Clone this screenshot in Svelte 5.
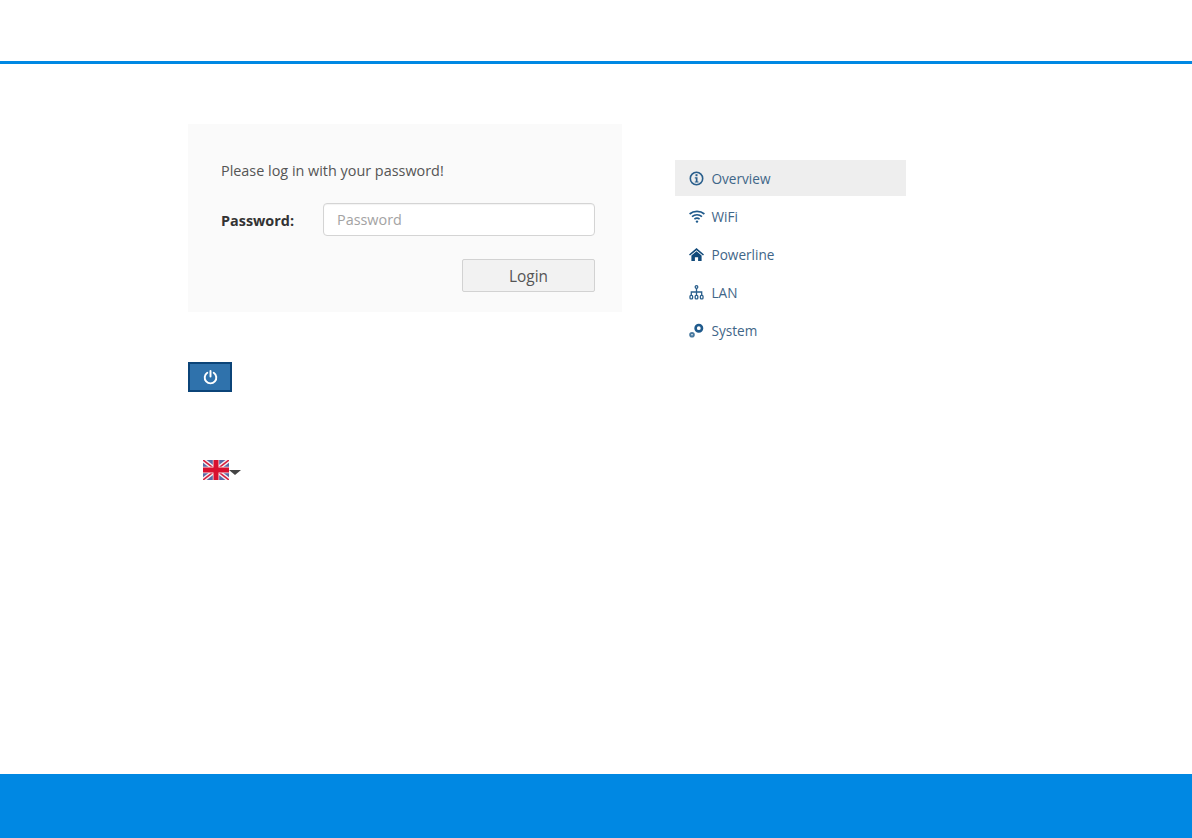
<script>
  const items = [
    { label: 'Overview', icon: 'info', active: true },
    { label: 'WiFi', icon: 'wifi' },
    { label: 'Powerline', icon: 'home' },
    { label: 'LAN', icon: 'lan' },
    { label: 'System', icon: 'gear' }
  ];
</script>

<div class="page">
  <header class="top"></header>
  <main class="main">
    <div class="left">
      <form class="panel" onsubmit={(e) => e.preventDefault()}>
        <p class="intro">Please log in with your password!</p>
        <div class="row">
          <label class="lbl" for="pw">Password:</label>
          <input id="pw" class="input" type="password" placeholder="Password" />
        </div>
        <div class="actions">
          <button class="login" type="submit">Login</button>
        </div>
      </form>
      <button class="power" type="button" aria-label="Power">
        <svg width="15" height="15" viewBox="0 0 14 14" fill="none" stroke="#fff" stroke-width="1.8" stroke-linecap="round">
          <path d="M4 2.6a5.4 5.4 0 1 0 6 0" />
          <path d="M7 1v5" />
        </svg>
      </button>
      <div class="lang">
        <svg class="flag" width="26" height="20" viewBox="0 0 26 20">
          <rect width="26" height="20" fill="#5a68a4" />
          <path d="M0 0L26 20M26 0L0 20" stroke="#f6f0f2" stroke-width="4.4" />
          <path d="M0 0L26 20M26 0L0 20" stroke="#d8203f" stroke-width="1.6" />
          <path d="M13 0V20M0 10H26" stroke="#f8e8ea" stroke-width="6.4" />
          <path d="M13 0V20M0 10H26" stroke="#d8102f" stroke-width="5" />
        </svg>
        <span class="caret"></span>
      </div>
    </div>
    <nav class="nav">
      {#each items as item}
        <a class="item" class:active={item.active} href="#top">
          <span class="ico">
            {#if item.icon === 'info'}
              <svg width="15" height="15" viewBox="0 0 15 15" fill="none">
                <circle cx="7.5" cy="7.5" r="6.2" stroke="#2a5f8c" stroke-width="1.6" />
                <rect x="6.5" y="3.2" width="2" height="2" fill="#2a5f8c" />
                <path d="M5.8 6.2h2.7v4.2h1v1.2H5.8v-1.2h1V7.4h-1z" fill="#2a5f8c" />
              </svg>
            {:else if item.icon === 'wifi'}
              <svg width="16" height="13" viewBox="0 0 16 13" fill="none" stroke="#1f5a8c" stroke-width="1.7">
                <path d="M.6 4C4.7.6 11.3.6 15.4 4" />
                <path d="M3 6.6c2.9-2.3 7.1-2.3 10 0" />
                <path d="M5.4 9.1c1.6-1.1 3.6-1.1 5.2 0" />
                <circle cx="8" cy="11.6" r="1.2" fill="#1f5a8c" stroke="none" />
              </svg>
            {:else if item.icon === 'home'}
              <svg width="15" height="13" viewBox="0 0 15 13">
                <path d="M7.5 0L15 6.4l-1 1.2L7.5 2.2 1 7.6 0 6.4z" fill="#124a7a" />
                <path d="M2.4 7.5L7.5 3.3l5.1 4.2V13H9.1V9.2H5.9V13H2.4z" fill="#124a7a" />
              </svg>
            {:else if item.icon === 'lan'}
              <svg width="15" height="15" viewBox="0 0 15 15" fill="none" stroke="#2a5f8c" stroke-width="1.3">
                <circle cx="7.5" cy="2" r="1.3" />
                <path d="M7.5 3.4V10M2.3 10V7h10.4v3" />
                <rect x="1" y="10.4" width="2.6" height="3.4" rx=".9" />
                <rect x="6.2" y="10.4" width="2.6" height="3.4" rx=".9" />
                <rect x="11.4" y="10.4" width="2.6" height="3.4" rx=".9" />
              </svg>
            {:else}
              <svg width="15" height="15" viewBox="0 0 15 15" fill="none" stroke="#1f5a8c">
                <circle cx="9.8" cy="5.2" r="3.2" stroke-width="2.6" />
                <circle cx="3" cy="11.8" r="1.8" stroke-width="2" stroke="#4a7aa0" />
              </svg>
            {/if}
          </span>
          <span class="text">{item.label}</span>
        </a>
      {/each}
    </nav>
  </main>
  <footer class="bottom"></footer>
</div>

<style>
  :global(body) {
    margin: 0;
    background: #fff;
  }
  .page {
    height: 838px;
    display: flex;
    flex-direction: column;
    font-family: "Open Sans", "Liberation Sans", sans-serif;
    font-size: 14.4px;
    overflow: hidden;
  }
  .top {
    height: 61px;
    border-bottom: 3px solid #0088e3;
    flex: none;
  }
  .main {
    flex: 1;
    display: flex;
    align-items: flex-start;
    padding: 60px 0 0 188px;
    gap: 53px;
  }
  .left {
    width: 434px;
    flex: none;
  }
  .panel {
    height: 188px;
    box-sizing: border-box;
    background: #fafafa;
    padding: 37px 27px 0 33px;
  }
  .intro {
    margin: 0;
    line-height: 19px;
    color: #555;
  }
  .row {
    display: flex;
    align-items: center;
    margin-top: 23px;
  }
  .lbl {
    width: 102px;
    font-weight: 700;
    color: #333;
    flex: none;
    padding-top: 2px;
  }
  .input {
    flex: 1;
    min-width: 0;
    height: 33px;
    box-sizing: border-box;
    border: 1px solid #d4d4d4;
    border-radius: 4px;
    background: #fff;
    padding: 0 14px 0 13px;
    font: inherit;
    box-shadow: inset 0 1px 1px rgba(0, 0, 0, 0.05);
  }
  .input::placeholder {
    color: #a3a3a3;
    opacity: 1;
  }
  .actions {
    display: flex;
    justify-content: flex-end;
    margin-top: 23px;
  }
  .login {
    width: 133px;
    height: 33px;
    border: 1px solid #d2d2d2;
    border-radius: 2px;
    background: #f2f2f2;
    color: #555;
    font: inherit;
    font-size: 15.4px;
    padding: 2px 0 0;
  }
  .power {
    display: flex;
    align-items: center;
    justify-content: center;
    width: 44px;
    height: 30px;
    margin-top: 50px;
    padding: 0;
    box-sizing: border-box;
    border: 2px solid #0b4478;
    border-radius: 0;
    background: #2f72ac;
  }
  .lang {
    display: flex;
    align-items: center;
    margin: 68px 0 0 15px;
  }
  .flag {
    display: block;
  }
  .caret {
    width: 0;
    height: 0;
    margin-top: 5px;
    border-left: 6px solid transparent;
    border-right: 6px solid transparent;
    border-top: 5px solid #444;
  }
  .nav {
    width: 231px;
    margin-top: 36px;
    display: flex;
    flex-direction: column;
    gap: 2px;
    flex: none;
  }
  .item {
    height: 36px;
    display: flex;
    align-items: center;
    padding-left: 14px;
    text-decoration: none;
    color: #3f6688;
    font-size: 13.6px;
  }
  .item.active {
    background: #eeeeee;
  }
  .ico {
    width: 23px;
    display: flex;
    align-items: center;
    flex: none;
  }
  .text {
    line-height: 1;
    margin-top: 2px;
    margin-left: -0.5px;
  }
  .bottom {
    height: 64px;
    background: #0088e3;
    flex: none;
  }
</style>
